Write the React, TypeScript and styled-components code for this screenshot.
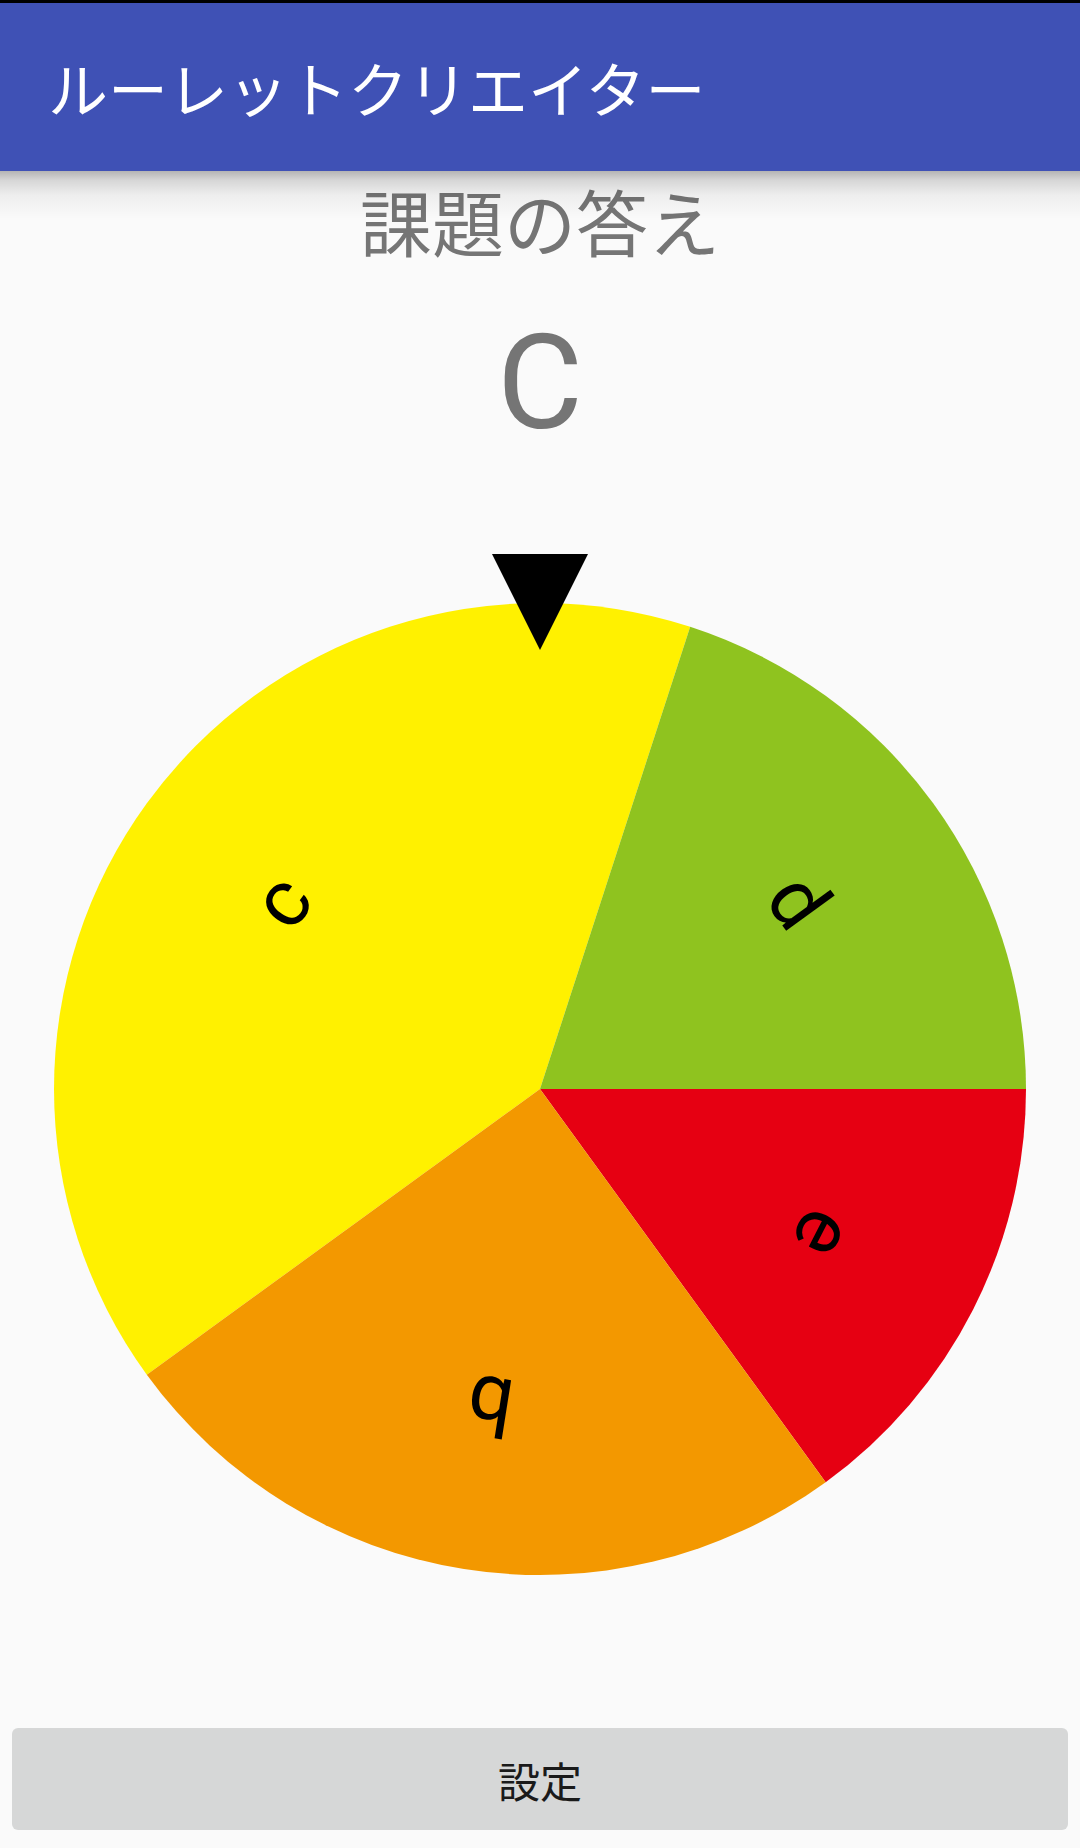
import React from "react";
import styled, { createGlobalStyle } from "styled-components";

const GlobalStyle = createGlobalStyle`
  html, body, #root {
    margin: 0;
    padding: 0;
    height: 100%;
  }
  body {
    background: #fafafa;
    font-family: Roboto, "Noto Sans CJK JP", sans-serif;
    overflow: hidden;
  }
`;

const Screen = styled.div`
  height: 1848px;
  display: flex;
  flex-direction: column;
  background: #fafafa;
`;

const StatusBar = styled.div`
  height: 3px;
  background: #000;
  flex: none;
`;

const AppBar = styled.header`
  position: relative;
  z-index: 2;
  flex: none;
  height: 168px;
  background: #3f51b5;
  display: flex;
  align-items: center;
  padding-left: 48px;
  &::after {
    content: "";
    position: absolute;
    left: 0;
    right: 0;
    top: 100%;
    height: 48px;
    background: linear-gradient(
      to bottom,
      rgba(0, 0, 0, 0.28) 0%,
      rgba(0, 0, 0, 0.14) 20%,
      rgba(0, 0, 0, 0.05) 50%,
      rgba(0, 0, 0, 0) 100%
    );
    pointer-events: none;
  }
`;

const AppTitle = styled.h1`
  margin: 0;
  font-family: "Noto Sans CJK JP", sans-serif;
  font-weight: 400;
  font-size: 60px;
  line-height: 60px;
  color: #ffffff;
`;

const Main = styled.main`
  flex: 1;
  display: flex;
  flex-direction: column;
  align-items: center;
`;

const Heading = styled.div`
  margin-top: 13px;
  font-family: "Noto Sans CJK JP", sans-serif;
  font-size: 72px;
  line-height: 72px;
  color: #757575;
`;

const Answer = styled.div`
  margin-top: 61px;
  font-family: Roboto, sans-serif;
  font-size: 132px;
  line-height: 132px;
  color: #757575;
`;

const WheelSvg = styled.svg`
  margin-top: 105px;
  display: block;
  flex: none;
`;

const SettingsButton = styled.button`
  flex: none;
  margin: 0 12px 18px;
  height: 102px;
  border: none;
  border-radius: 6px;
  background: #d6d7d7;
  font-family: "Noto Sans CJK JP", sans-serif;
  font-size: 42px;
  color: #1a1a1a;
  cursor: pointer;
`;

type Slice = { label: string; color: string; start: number; end: number };

const slices: Slice[] = [
  { label: "c", color: "#FFF100", start: -126, end: 18 },
  { label: "d", color: "#8FC31F", start: 18, end: 90 },
  { label: "e", color: "#E60012", start: 90, end: 144 },
  { label: "b", color: "#F39800", start: 144, end: 234 },
];

const CX = 540;
const CY = 535;
const R = 486;

function pt(bearing: number, r: number) {
  const a = (bearing * Math.PI) / 180;
  return [CX + r * Math.sin(a), CY - r * Math.cos(a)];
}

function slicePath(s: Slice) {
  const [x1, y1] = pt(s.start, R);
  const [x2, y2] = pt(s.end, R);
  const large = s.end - s.start > 180 ? 1 : 0;
  return `M ${CX} ${CY} L ${x1.toFixed(2)} ${y1.toFixed(2)} A ${R} ${R} 0 ${large} 1 ${x2.toFixed(
    2
  )} ${y2.toFixed(2)} Z`;
}

function Wheel() {
  return (
    <WheelSvg width={1080} height={1030} viewBox="0 0 1080 1030">
      {slices.map((s) => (
        <path key={s.label} d={slicePath(s)} fill={s.color} />
      ))}
      {slices.map((s) => {
        const mid = (s.start + s.end) / 2;
        return (
          <text
            key={"t" + s.label}
            x={CX}
            y={CY - 292}
            textAnchor="middle"
            fontFamily="Roboto, sans-serif"
            fontSize={80}
            fill="#000"
            transform={`rotate(${mid} ${CX} ${CY})`}
          >
            {s.label}
          </text>
        );
      })}
      <polygon points="492,0 588,0 540,96" fill="#000" />
    </WheelSvg>
  );
}

export default function App() {
  return (
    <>
      <GlobalStyle />
      <Screen>
        <StatusBar />
        <AppBar>
          <AppTitle>ルーレットクリエイター</AppTitle>
        </AppBar>
        <Main>
          <Heading>課題の答え</Heading>
          <Answer>C</Answer>
          <Wheel />
        </Main>
        <SettingsButton>設定</SettingsButton>
      </Screen>
    </>
  );
}
